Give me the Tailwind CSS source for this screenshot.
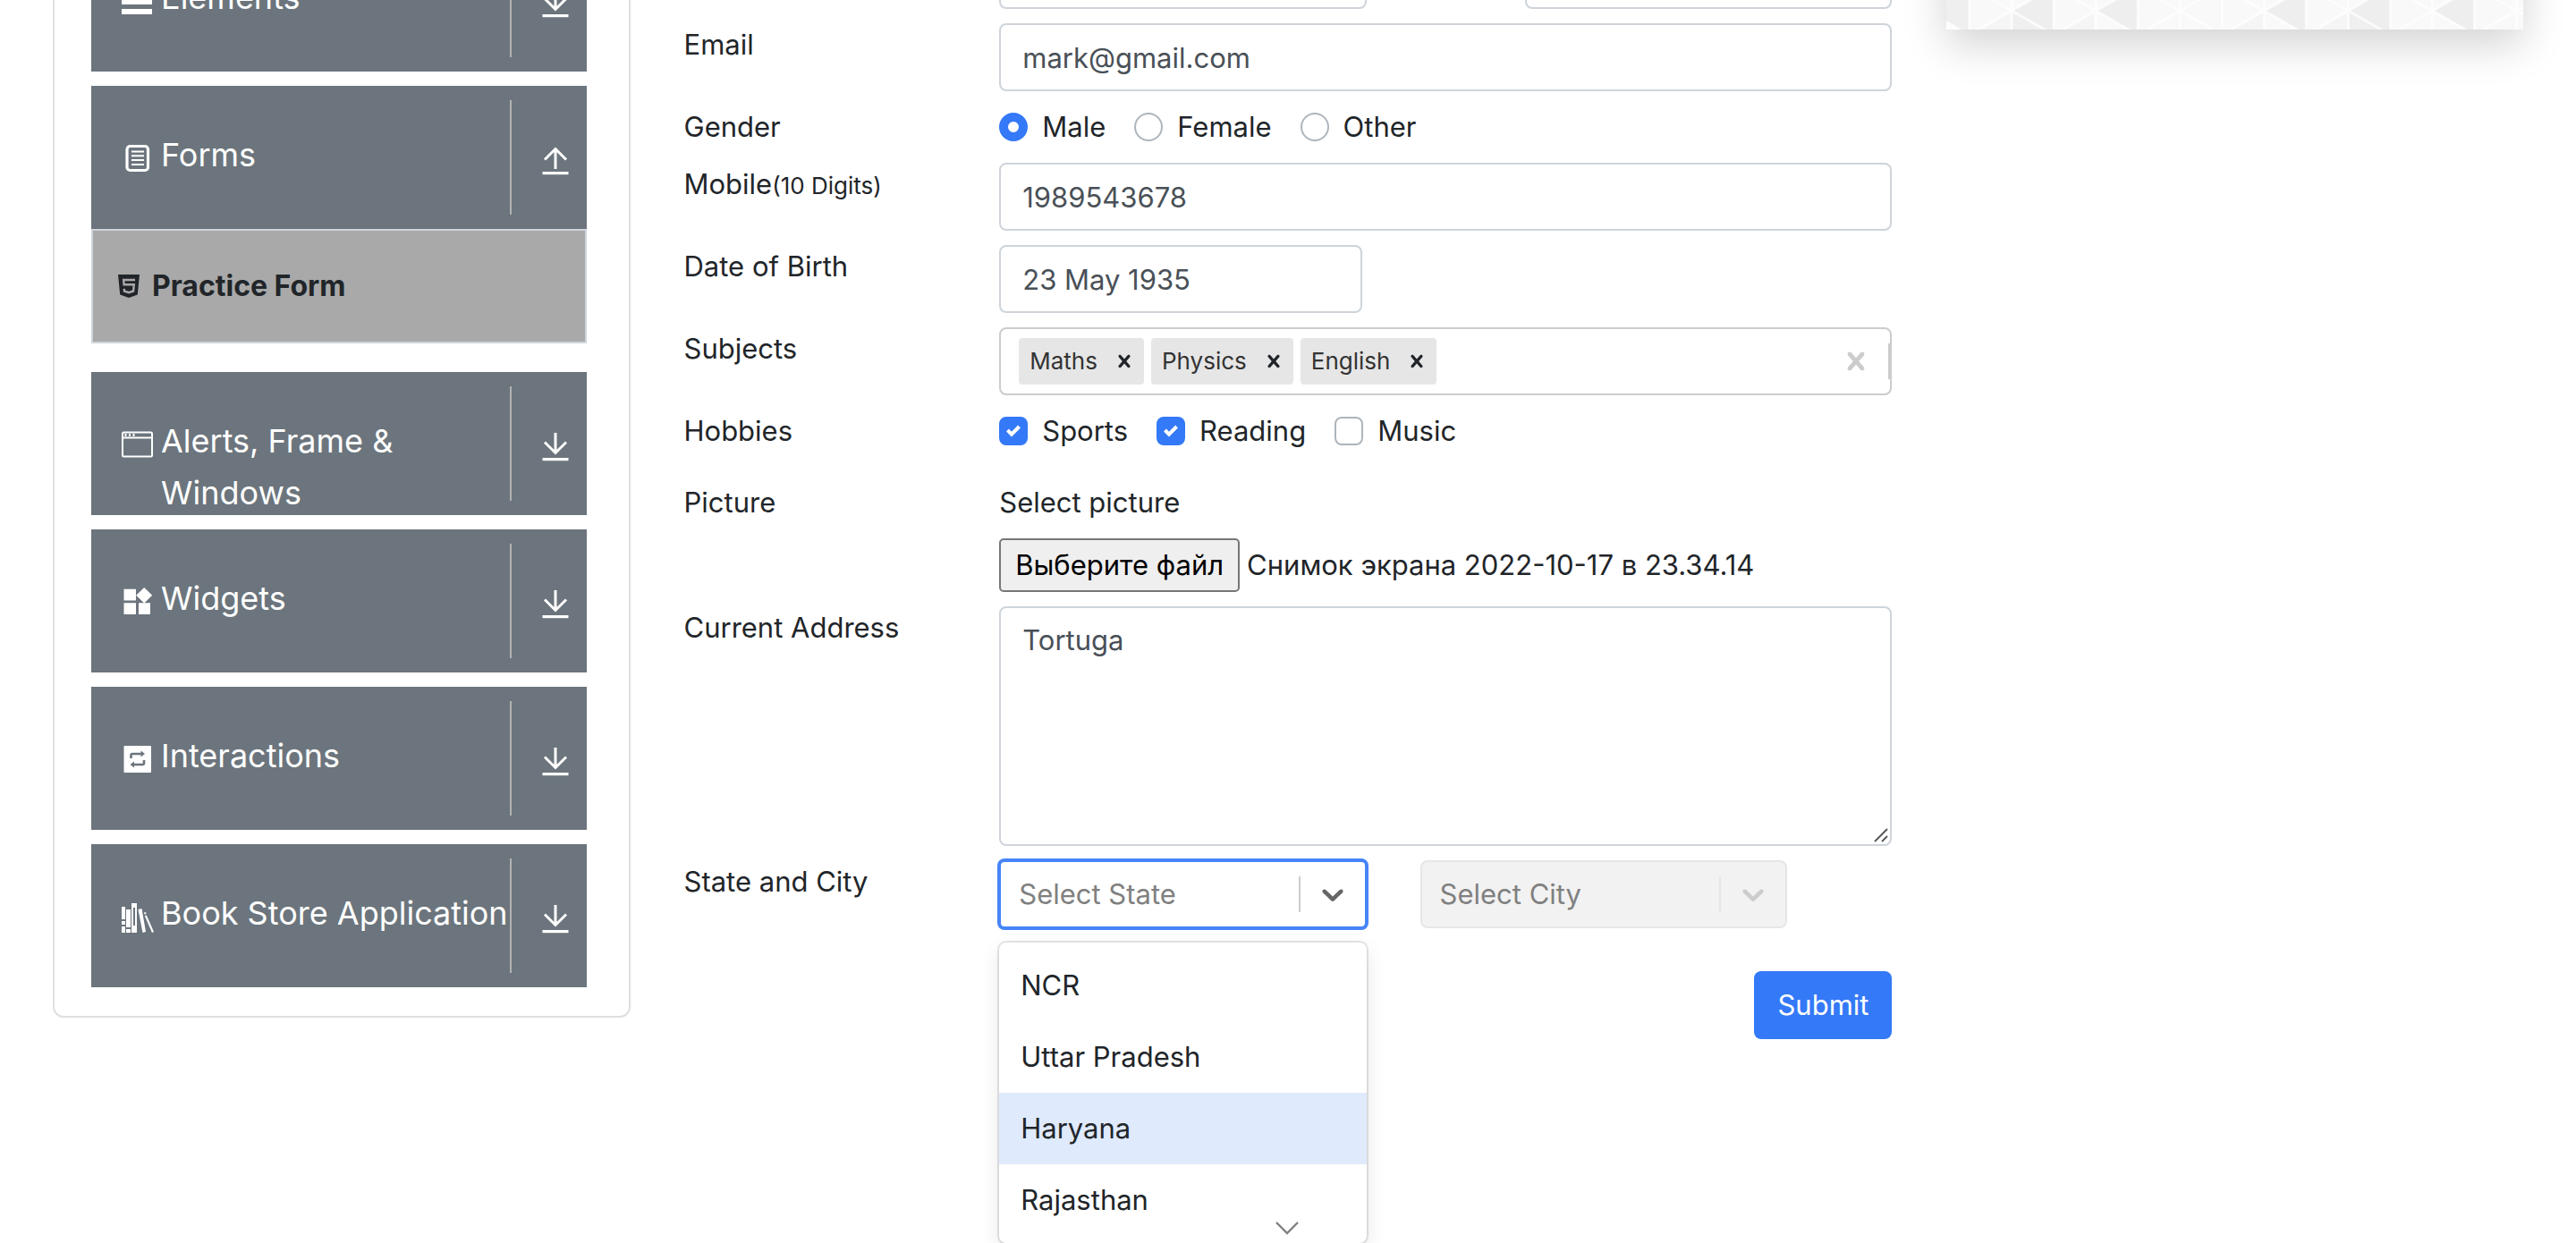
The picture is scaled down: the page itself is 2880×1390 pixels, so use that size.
<!DOCTYPE html>
<html lang="en">
<head>
<meta charset="utf-8">
<title>Practice Form</title>
<script src="https://cdn.jsdelivr.net/npm/@tailwindcss/browser@4"></script>
</head>
<body class="bg-white font-['Inter',sans-serif] text-[31px] leading-[48px] text-[#212529]">
<svg class="hidden" aria-hidden="true">
  <symbol id="down" viewBox="0 0 30 32"><path d="M15 0v22M3 10.500l12 12 12-12" fill="none" stroke="currentColor" stroke-width="3"/><path d="M.5 28h29v3.200H.5z" fill="currentColor"/></symbol>
  <symbol id="up" viewBox="0 0 30 32"><path d="M15 25V3M3 14.500l12-12 12 12" fill="none" stroke="currentColor" stroke-width="3"/><path d="M.5 28h29v3.200H.5z" fill="currentColor"/></symbol>
  <symbol id="cross" viewBox="0 0 20 20"><path d="M14.348 14.849c-0.469 0.469-1.229 0.469-1.697 0l-2.651-3.030-2.651 3.029c-0.469 0.469-1.229 0.469-1.697 0-0.469-0.469-0.469-1.229 0-1.697l2.758-3.15-2.759-3.152c-0.469-0.469-0.469-1.228 0-1.697s1.228-0.469 1.697 0l2.652 3.031 2.651-3.031c0.469-0.469 1.228-0.469 1.697 0s0.469 1.229 0 1.697l-2.758 3.152 2.758 3.15c0.469 0.469 0.469 1.229 0 1.698z" fill="currentColor"/></symbol>
  <symbol id="chevron" viewBox="0 0 20 20"><path d="M4.516 7.548c0.436-0.446 1.043-0.481 1.576 0l3.908 3.747 3.908-3.747c0.533-0.481 1.141-0.446 1.574 0 0.436 0.445 0.408 1.197 0 1.615-0.406 0.418-4.695 4.502-4.695 4.502-0.217 0.223-0.502 0.335-0.787 0.335s-0.57-0.112-0.789-0.335c0 0-4.287-4.084-4.695-4.502s-0.436-1.17 0-1.615z" fill="currentColor"/></symbol>
  <symbol id="check" viewBox="0 0 8 8"><path d="M6.564.75l-3.59 3.612-1.538-1.55L0 4.26 2.974 7.25 8 2.193z" fill="#fff"/></symbol>
</svg>
<div class="h-screen overflow-hidden">
<main class="-mt-20 grid grid-cols-12 items-start gap-[60px] px-[59px]">

  <nav class="col-span-3 rounded-b-[12px] border-2 border-t-0 border-[#dfdfdf] pb-8 pl-[41px] pr-[47px] text-[36px] leading-[58px] text-white" aria-label="Sections">
    <div class="flex flex-col gap-4">
      <button type="button" class="flex h-40 w-full overflow-hidden bg-[#6c757d] pl-8 text-left">
        <svg class="mt-[62px] h-[38px] w-[38px] shrink-0" viewBox="0 0 38 38"><path d="M2 6h34v6H2zM2 17h34v6H2zM2 28h34v6H2z" fill="#fff"/></svg>
        <span class="flex-1 pl-2 pt-12">Elements</span>
        <span class="my-4 flex w-[86px] shrink-0 justify-center border-l-2 border-[#b3b3b3] pl-[14px] pt-[52px]"><svg class="h-8 w-[30px]"><use href="#down"/></svg></span>
      </button>
      <div class="mb-4">
        <button type="button" class="flex h-40 w-full overflow-hidden bg-[#6c757d] pl-8 text-left" aria-expanded="true">
          <svg class="mt-[62px] h-[38px] w-[38px] shrink-0" viewBox="0 0 38 38" fill="none" stroke="#fff"><rect x="8" y="5.500" width="23.500" height="27" rx="3.500" stroke-width="3.200"/><path d="M13 11.500h14M13 16.300h14M13 21.100h14M13 26h14" stroke-width="2"/></svg>
          <span class="flex-1 pl-2 pt-12">Forms</span>
          <span class="my-4 flex w-[86px] shrink-0 justify-center border-l-2 border-[#b3b3b3] pl-[14px] pt-[52px]"><svg class="h-8 w-[30px]"><use href="#up"/></svg></span>
        </button>
        <a href="#practice" class="flex h-32 items-center gap-[14px] border-2 border-[#ced4da] bg-[#a9a9a9] pl-7 text-[32px] font-bold leading-[48px] text-[#212529]">
          <svg class="h-[26px] w-[24px]" viewBox="0 0 24 26"><path d="M0 0h24l-2.200 22.500L12 26l-9.800-3.500z" fill="#212529"/><path d="M19 6H6.200l.4 5.200h11.200l-.7 7.300-5.100 1.700-5-1.700-.2-2.600" fill="none" stroke="#a9a9a9" stroke-width="2.400"/></svg>
          Practice Form
        </a>
      </div>
      <button type="button" class="flex h-40 w-full overflow-hidden bg-[#6c757d] pl-8 text-left">
        <svg class="mt-[62px] h-[38px] w-[38px] shrink-0" viewBox="0 0 38 38" fill="none" stroke="#fff"><rect x="3" y="5.500" width="33" height="27" rx="1.500" stroke-width="2"/><path d="M3 11.500h33" stroke-width="2"/><path d="M5.500 8.500h2M10 8.500h2M14.500 8.500h2" stroke-width="3"/></svg>
        <span class="flex-1 pl-2 pt-12">Alerts, Frame &amp; Windows</span>
        <span class="my-4 flex w-[86px] shrink-0 justify-center border-l-2 border-[#b3b3b3] pl-[14px] pt-[52px]"><svg class="h-8 w-[30px]"><use href="#down"/></svg></span>
      </button>
      <button type="button" class="flex h-40 w-full overflow-hidden bg-[#6c757d] pl-8 text-left">
        <svg class="mt-[62px] h-[38px] w-[38px] shrink-0" viewBox="0 0 38 38" fill="#fff"><path d="M4.500 4.800H18v12.700H4.500zM4.500 20.300H18V33H4.500zM21 20.300h13V33H21zM27.200 3l9 8.700-9 8.700-9-8.700z"/></svg>
        <span class="flex-1 pl-2 pt-12">Widgets</span>
        <span class="my-4 flex w-[86px] shrink-0 justify-center border-l-2 border-[#b3b3b3] pl-[14px] pt-[52px]"><svg class="h-8 w-[30px]"><use href="#down"/></svg></span>
      </button>
      <button type="button" class="flex h-40 w-full overflow-hidden bg-[#6c757d] pl-8 text-left">
        <svg class="mt-[62px] h-[38px] w-[38px] shrink-0" viewBox="0 0 38 38"><rect x="4.500" y="4" width="30.500" height="30" rx="1" fill="#fff"/><path d="M12.500 18v-3.500q0-1.500 1.500-1.500h11M27 20v3.500q0 1.500-1.500 1.500h-11" fill="none" stroke="#6c757d" stroke-width="2.600"/><path d="M23.500 9.500l4.500 3.500-4.500 3.500zM16 21.500L11.500 25l4.500 3.500z" fill="#6c757d"/></svg>
        <span class="flex-1 pl-2 pt-12">Interactions</span>
        <span class="my-4 flex w-[86px] shrink-0 justify-center border-l-2 border-[#b3b3b3] pl-[14px] pt-[52px]"><svg class="h-8 w-[30px]"><use href="#down"/></svg></span>
      </button>
      <button type="button" class="flex h-40 w-full overflow-hidden bg-[#6c757d] pl-8 text-left">
        <svg class="mt-[62px] h-[38px] w-[38px] shrink-0" viewBox="0 0 38 38" fill="#fff"><path d="M2 8h4v14H2zM2 24h4v4H2zM2 30h4v7H2zM7 11h5v20H7zM7 33h5v4H7z"/><path d="M13 4h6v33h-6zM15 9v20h2V9z" fill-rule="evenodd"/><path d="M20.500 11l4-1 4.500 26-3.500 1zM27 14.500l2-.5.500 2-2 .5zM27.800 18l2-.5L38 36l-2 1z"/></svg>
        <span class="min-w-0 flex-1 whitespace-nowrap pl-2 pt-12">Book Store Application</span>
        <span class="my-4 flex w-[86px] shrink-0 justify-center border-l-2 border-[#b3b3b3] pl-[14px] pt-[52px]"><svg class="h-8 w-[30px]"><use href="#down"/></svg></span>
      </button>
    </div>
  </nav>

  <form id="practice" class="col-span-6 grid grid-cols-12 gap-x-[60px] gap-y-4 pt-[14px]" onsubmit="return false">
    <label for="first" class="col-span-3">Name</label>
    <input id="first" class="col-span-4 h-[76px] min-w-0 rounded-lg border-2 border-[#ced4da] px-6 text-[#495057]">
    <span class="col-span-1"></span>
    <input aria-label="Last name" class="col-span-4 h-[76px] min-w-0 rounded-lg border-2 border-[#ced4da] px-6 text-[#495057]">

    <label for="email" class="col-span-3">Email</label>
    <input id="email" type="email" value="mark@gmail.com" class="col-span-9 h-[76px] rounded-lg border-2 border-[#ced4da] px-6 text-[#495057]">

    <span class="col-span-3" id="gender">Gender</span>
    <div class="col-span-9 flex gap-8" role="radiogroup" aria-labelledby="gender">
      <label class="flex items-center gap-4"><input type="radio" name="gender" checked class="h-8 w-8 appearance-none rounded-full border-2 border-[#adb5bd] bg-white checked:border-[10px] checked:border-[#3479f7]">Male</label>
      <label class="flex items-center gap-4"><input type="radio" name="gender" class="h-8 w-8 appearance-none rounded-full border-2 border-[#adb5bd] bg-white checked:border-[10px] checked:border-[#3479f7]">Female</label>
      <label class="flex items-center gap-4"><input type="radio" name="gender" class="h-8 w-8 appearance-none rounded-full border-2 border-[#adb5bd] bg-white checked:border-[10px] checked:border-[#3479f7]">Other</label>
    </div>

    <label for="mobile" class="col-span-3">Mobile<small class="text-[26px]">(10 Digits)</small></label>
    <input id="mobile" type="tel" value="1989543678" class="col-span-9 h-[76px] rounded-lg border-2 border-[#ced4da] px-6 text-[#495057]">

    <label for="dob" class="col-span-3">Date of Birth</label>
    <div class="col-span-9"><input id="dob" value="23 May 1935" class="block h-[76px] w-[406px] rounded-lg border-2 border-[#ced4da] px-6 text-[#495057]"></div>

    <label for="subjects" class="col-span-3">Subjects</label>
    <div class="col-span-9 flex h-[76px] items-center gap-2 rounded-lg border-2 border-[#ccc] pl-5 text-[26px] leading-9 text-[#333]">
      <span class="flex h-[52px] items-center rounded bg-[#e6e6e6] pl-3">Maths<button type="button" aria-label="Remove Maths" class="ml-2 px-2 text-[#212529]"><svg class="h-7 w-7"><use href="#cross"/></svg></button></span>
      <span class="flex h-[52px] items-center rounded bg-[#e6e6e6] pl-3">Physics<button type="button" aria-label="Remove Physics" class="ml-2 px-2 text-[#212529]"><svg class="h-7 w-7"><use href="#cross"/></svg></button></span>
      <span class="flex h-[52px] items-center rounded bg-[#e6e6e6] pl-3">English<button type="button" aria-label="Remove English" class="ml-2 px-2 text-[#212529]"><svg class="h-7 w-7"><use href="#cross"/></svg></button></span>
      <input id="subjects" class="min-w-0 flex-1 outline-none">
      <button type="button" aria-label="Clear subjects" class="px-2 text-[#ccc]"><svg class="h-10 w-10"><use href="#cross"/></svg></button>
      <span class="h-10 w-[2px] bg-[#ccc]"></span>
    </div>

    <span class="col-span-3" id="hobbies">Hobbies</span>
    <div class="col-span-9 mb-4 flex gap-8" role="group" aria-labelledby="hobbies">
      <label class="flex items-center gap-4"><span class="relative h-8 w-8"><input type="checkbox" checked class="peer block h-8 w-8 appearance-none rounded-lg border-2 border-[#adb5bd] checked:border-[#3479f7] checked:bg-[#3479f7]"><svg class="pointer-events-none absolute inset-2 hidden h-4 w-4 peer-checked:block"><use href="#check"/></svg></span>Sports</label>
      <label class="flex items-center gap-4"><span class="relative h-8 w-8"><input type="checkbox" checked class="peer block h-8 w-8 appearance-none rounded-lg border-2 border-[#adb5bd] checked:border-[#3479f7] checked:bg-[#3479f7]"><svg class="pointer-events-none absolute inset-2 hidden h-4 w-4 peer-checked:block"><use href="#check"/></svg></span>Reading</label>
      <label class="flex items-center gap-4"><span class="relative h-8 w-8"><input type="checkbox" class="peer block h-8 w-8 appearance-none rounded-lg border-2 border-[#adb5bd] checked:border-[#3479f7] checked:bg-[#3479f7]"><svg class="pointer-events-none absolute inset-2 hidden h-4 w-4 peer-checked:block"><use href="#check"/></svg></span>Music</label>
    </div>

    <span class="col-span-3">Picture</span>
    <div class="col-span-9">
      <label for="picture" class="mb-4 block">Select picture</label>
      <div class="flex items-center gap-2">
        <button type="button" onclick="document.getElementById('picture').click()" class="h-[60px] rounded-[5px] border-2 border-[#767676] bg-[#efefef] px-4 text-black">Выберите файл</button>
        <span>Снимок экрана 2022-10-17 в 23.34.14</span>
        <input id="picture" type="file" class="sr-only">
      </div>
    </div>

    <label for="address" class="col-span-3">Current Address</label>
    <div class="relative col-span-9">
      <textarea id="address" class="block h-[268px] w-full resize-none rounded-lg border-2 border-[#ced4da] px-6 py-3 text-[#495057]">Tortuga</textarea>
      <svg class="pointer-events-none absolute bottom-1 right-1 h-4 w-4" viewBox="0 0 16 16"><path d="M1 15L15 1M9 15l6-6" stroke="#555" stroke-width="1.800"/></svg>
    </div>

    <label for="state" class="col-span-3">State and City</label>
    <div class="relative col-span-4">
      <select id="state" class="block h-[76px] w-full appearance-none rounded-md bg-white pl-[22px] text-[#808080] outline-4 -outline-offset-2 outline-[#4684f8]">
        <option>Select State</option><option>NCR</option><option>Uttar Pradesh</option><option>Haryana</option><option>Rajasthan</option>
      </select>
      <div class="pointer-events-none absolute inset-y-0 right-[2px] flex items-center text-[#666]"><span class="h-10 w-[2px] bg-[#ccc]"></span><svg class="mx-4 h-10 w-10"><use href="#chevron"/></svg></div>
      <ul role="listbox" aria-label="States" class="absolute inset-x-0 top-[92px] rounded-lg bg-white py-2 shadow-[0_0_0_2px_rgba(0,0,0,0.1),0_8px_22px_rgba(0,0,0,0.1)]">
        <li role="option" class="px-6 py-4">NCR</li>
        <li role="option" class="px-6 py-4">Uttar Pradesh</li>
        <li role="option" aria-selected="true" class="bg-[#dfeafd] px-6 py-4">Haryana</li>
        <li role="option" class="px-6 py-4">Rajasthan</li>
        <li role="presentation" class="absolute bottom-2 right-[76px]"><svg class="h-4 w-[26px]" viewBox="0 0 26 16" fill="none" stroke="#808080" stroke-width="2.400"><path d="M1 1l12 12L25 1"/></svg></li>
      </ul>
    </div>
    <div class="relative col-span-4">
      <select aria-label="City" disabled class="block h-[76px] w-full appearance-none rounded-lg border-2 border-[#e6e6e6] bg-[#f2f2f2] pl-5 text-[#808080] opacity-100"><option>Select City</option></select>
      <div class="pointer-events-none absolute inset-y-0 right-[2px] flex items-center text-[#ccc]"><span class="h-10 w-[2px] bg-[#e6e6e6]"></span><svg class="mx-4 h-10 w-10"><use href="#chevron"/></svg></div>
    </div>

    <div class="col-span-12 mt-8 flex justify-end">
      <button type="submit" class="h-[76px] rounded-lg bg-[#3479f7] px-[26px] text-white">Submit</button>
    </div>
  </form>

  <aside class="col-span-3">
    <svg class="block h-[113px] w-full bg-[#f9f9f9] shadow-[0_16px_48px_rgba(0,0,0,0.18)]" viewBox="0 0 645 113" preserveAspectRatio="none" aria-hidden="true">
      <defs>
        <symbol id="star" overflow="visible"><path d="M-47-27L47 27M-47 27L47-27M0-27V27M-47-27V27" stroke="#fff" stroke-width="3" opacity=".75"/></symbol>
      </defs>
      <path d="M0 76h25v37H16L0 103z" fill="#efefef"/>
      <path d="M73 92l47-27v54zM167 92l47-27v54zM355 92l47-27v54zM449 92l47-27v54zM543 92l47-27v54z" fill="#eee"/>
      <path d="M73 92v27h47zM449 92v27h47z" fill="#efefef"/>
      <path d="M355 92v27h-47zM449 92v27h-47zM73 92v27H26zM167 92v27h-47z" fill="#f5f5f5"/>
      <path d="M0 103l17 10H0z" fill="#fdfdfd"/>
      <use href="#star" x="73" y="92"/><use href="#star" x="167" y="92"/><use href="#star" x="261" y="92"/><use href="#star" x="355" y="92"/><use href="#star" x="449" y="92"/><use href="#star" x="543" y="92"/><use href="#star" x="637" y="92"/>
    </svg>
  </aside>
</main>
</div>
</body>
</html>
